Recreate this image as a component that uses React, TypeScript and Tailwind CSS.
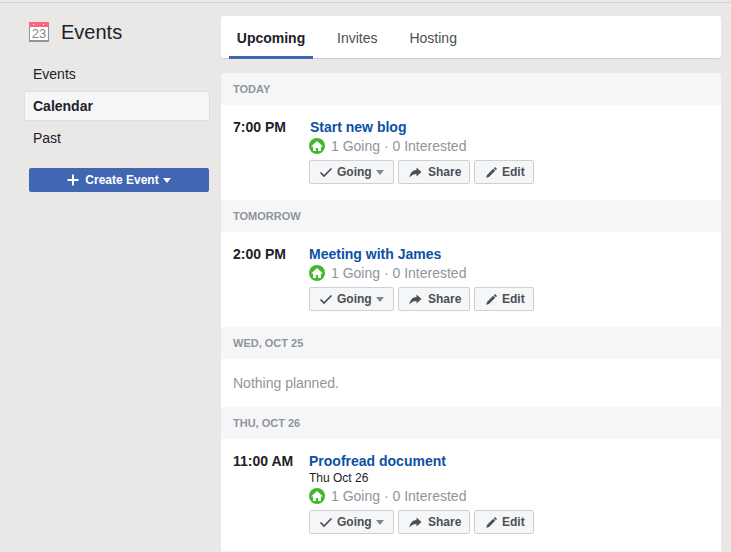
import React from 'react';

const FONT = "font-['Liberation_Sans',Arial,sans-serif]";

function CalendarIcon() {
  return (
    <svg width="20" height="20" viewBox="0 0 20 20" className="shrink-0">
      <rect x="0" y="0" width="20" height="20" fill="#8d949e" />
      <rect x="1" y="5" width="18" height="13" fill="#fff" />
      <rect x="0" y="0" width="20" height="5" fill="#f7677f" />
      <rect x="4" y="2" width="1" height="1" fill="#fff" />
      <rect x="14" y="2" width="1" height="1" fill="#fff" />
      <text x="10" y="16" textAnchor="middle" fontSize="13" fill="#7f8590" fontFamily="Liberation Sans">
        23
      </text>
    </svg>
  );
}

function HomeBadge() {
  return (
    <span className="flex h-4 w-4 shrink-0 items-center justify-center rounded-full bg-[#42b72a]">
      <svg width="12" height="12" viewBox="0 0 12 12">
        <path d="M6 1 L12 6.5 H10 V11 H7 V8 H5 V11 H2 V6.5 H0 Z" fill="#fff" />
      </svg>
    </span>
  );
}

function Caret({ className }: { className: string }) {
  return <span className={`inline-block h-0 w-0 border-x-[4.5px] border-t-[5px] border-x-transparent ${className}`} />;
}

function ActionButton({ children, className }: { children: React.ReactNode; className: string }) {
  return (
    <div className={`flex h-6 items-center rounded-[2px] border border-[#ced0d4] bg-[#f5f6f7] text-xs font-bold text-[#4b4f56] ${className}`}>
      {children}
    </div>
  );
}

function EventRow({ time, title, date, titleClass = '' }: { time: string; title: string; date?: string; titleClass?: string }) {
  return (
    <div className={`flex bg-white pl-3 pt-[14px] ${date ? 'h-[111px]' : 'h-[95px]'}`}>
      <div className="w-[76px] text-sm leading-4 font-bold text-[#1d2129]">{time}</div>
      <div className="flex flex-col">
        <div className={`text-sm leading-4 font-bold text-[#0c50a5] ${titleClass}`}>{title}</div>
        {date && <div className="mt-[1px] text-xs leading-4 text-[#1d2129]">{date}</div>}
        <div className={`flex h-[19px] items-center gap-[6px] text-sm text-[#90949c] ${date ? 'mt-0' : 'mt-[1px]'}`}>
          <HomeBadge />
          <span>1 Going · 0 Interested</span>
        </div>
        <div className="mt-[5px] flex gap-1">
          <ActionButton className="w-[85px] pl-[9px]">
            <svg width="14" height="12" viewBox="0 0 14 12" className="mr-[4px]">
              <path d="M1.5 6.5 L5 10 L12.5 2.5" fill="none" stroke="#4b4f56" strokeWidth="1.7" />
            </svg>
            Going
            <Caret className="ml-[4px] border-t-[#7f8590]" />
          </ActionButton>
          <ActionButton className="w-[72px] pl-[10px]">
            <svg width="13" height="11" viewBox="0 0 13 11" className="mr-[6px]">
              <path d="M7.5 0.5 L12.5 5 L7.5 9.5 V7 C4.5 7 2.5 8 0.5 10.5 C1 6 3.5 3.2 7.5 3 Z" fill="#4b4f56" />
            </svg>
            Share
          </ActionButton>
          <ActionButton className="w-[60px] pl-[10px]">
            <svg width="13" height="13" viewBox="0 0 13 13" className="mr-[4px]">
              <path d="M10 1 L12 3 L10.8 4.2 L8.8 2.2 Z M8.2 2.8 L10.2 4.8 L4 11 L1.2 11.8 L2 9 Z" fill="#4b4f56" />
            </svg>
            Edit
          </ActionButton>
        </div>
      </div>
    </div>
  );
}

function DayHeader({ label }: { label: string }) {
  return (
    <div className="flex h-8 items-center bg-[#f5f6f7] pl-3 text-[11px] font-bold text-[#90949c]">{label}</div>
  );
}

export default function App() {
  return (
    <div className={`h-[552px] w-[731px] overflow-hidden bg-[#e9e8e6] pt-[2px] ${FONT}`}>
      <div className="flex border-t border-[#d3d3d3] pt-[13px]">
        <aside className="ml-6 w-[186px] shrink-0">
          <div className="flex h-8 items-center pl-[5px]">
            <CalendarIcon />
            <span className="ml-3 text-xl text-[#1d2129]">Events</span>
          </div>
          <div className="mt-[13px] flex h-[26px] items-center pl-[9px] text-sm text-[#1d2129]">Events</div>
          <div className="mt-[4px] flex h-[30px] items-center rounded-[2px] border border-[#dddfe2] bg-[#f5f6f7] pl-2 text-sm font-bold text-[#1d2129]">
            Calendar
          </div>
          <div className="mt-[1px] flex h-[32px] items-center pl-[9px] text-sm text-[#1d2129]">Past</div>
          <div className="mt-[14px] ml-[5px] flex h-6 w-[180px] items-center justify-center rounded-[2px] bg-[#4267b2] text-xs font-bold text-white">
            <svg width="12" height="12" viewBox="0 0 12 12" className="mr-[6px]">
              <path d="M5 0.5 H7 V5 H11.5 V7 H7 V11.5 H5 V7 H0.5 V5 H5 Z" fill="#fff" />
            </svg>
            Create Event
            <Caret className="ml-[4px] border-t-white" />
          </div>
        </aside>
        <main className="ml-[11px] w-[500px] shrink-0">
          <div className="flex h-[43px] rounded-[3px] border-b border-[#d0d1d5] bg-white pl-2">
            <div className="flex h-[43px] w-[84px] items-center justify-center border-b-[3px] border-[#4267b2] pt-[3px] text-sm font-bold text-[#1d2129]">
              Upcoming
            </div>
            <div className="ml-6 flex h-[43px] items-center pt-[1px] text-sm text-[#4b4f56]">Invites</div>
            <div className="ml-8 flex h-[43px] items-center pt-[1px] text-sm text-[#4b4f56]">Hosting</div>
          </div>
          <div className="mt-[14px] overflow-hidden rounded-t-[3px]">
            <DayHeader label="TODAY" />
            <EventRow time="7:00 PM" title="Start new blog" titleClass="pl-px" />
            <DayHeader label="TOMORROW" />
            <EventRow time="2:00 PM" title="Meeting with James" />
            <DayHeader label="WED, OCT 25" />
            <div className="flex h-12 items-center bg-white pl-3 text-sm text-[#90949c]">Nothing planned.</div>
            <DayHeader label="THU, OCT 26" />
            <EventRow time="11:00 AM" title="Proofread document" date="Thu Oct 26" />
            <DayHeader label="" />
          </div>
        </main>
      </div>
    </div>
  );
}
